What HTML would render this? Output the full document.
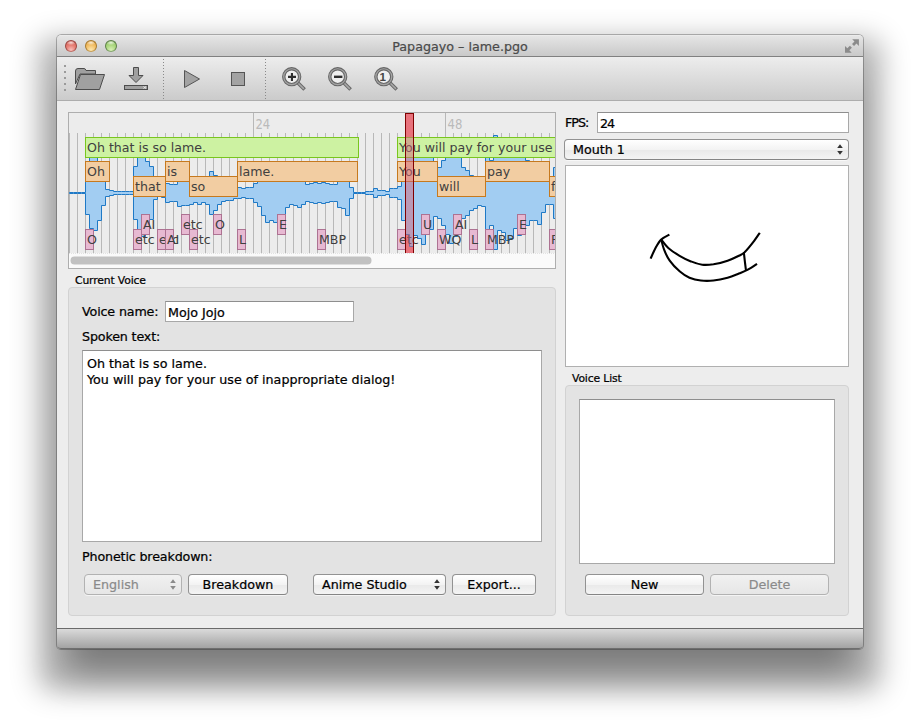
<!DOCTYPE html>
<html><head><meta charset="utf-8"><title>Papagayo – lame.pgo</title>
<style>
html,body{margin:0;padding:0;background:#fff;}
body{width:920px;height:728px;position:relative;overflow:hidden;font-family:"DejaVu Sans","Liberation Sans",sans-serif;font-size:12.7px;color:#000;-webkit-text-stroke:.22px currentColor;}
.abs{position:absolute;}
#win{position:absolute;left:57px;top:35px;width:806px;height:614px;border-radius:4.500px 4.500px 4px 4px;background:#ededed;
 box-shadow:0 0 0 1px rgba(0,0,0,.26),0 22.500px 28px 19px rgba(0,0,0,.29),0 34px 32.600px -10px rgba(0,0,0,.33);}
#title{left:0;top:0;width:806px;height:22px;border-radius:4.500px 4.500px 0 0;background:linear-gradient(#f2f2f2 0,#e5e5e5 1px,#c9c9c9);border-bottom:1px solid #808080;box-sizing:border-box;}
#title .t{position:absolute;left:0;width:806px;top:3.5px;text-align:center;font-size:12.7px;color:#4a4a4a;}
.tl{position:absolute;top:5px;width:12px;height:12px;border-radius:50%;box-sizing:border-box;}
#tool{left:0;top:22px;width:806px;height:44px;background:linear-gradient(#ededed,#cbcbcb);border-bottom:1px solid #adadad;box-sizing:border-box;}
#status{left:0;top:593px;width:806px;height:21px;border-radius:0 0 4px 4px;background:linear-gradient(#dadada,#a3a3a3);border-top:1px solid #6a6a6a;border-bottom:1px solid #6e6e6e;box-sizing:border-box;}
.lbl{position:absolute;white-space:nowrap;line-height:16px;margin-top:1px;letter-spacing:-.15px;}
.grp{position:absolute;background:#e3e3e3;border:1px solid #d2d2d2;border-radius:4px;box-sizing:border-box;}
.inp{position:absolute;background:#fff;border:1px solid #a8a8a8;border-top-color:#8e8e8e;box-sizing:border-box;white-space:nowrap;}
.btn{position:absolute;box-sizing:border-box;height:21px;border:1px solid #929292;border-bottom-color:#858585;border-radius:4px;background:linear-gradient(#ffffff,#f3f3f3 50%,#e9e9e9 51%,#f4f4f4);text-align:center;line-height:18px;padding-top:1px;box-shadow:0 1px 0 rgba(255,255,255,.6);white-space:nowrap;}
.btn.dis{color:#8a8a8a;border-color:#b2b2b2;background:linear-gradient(#f1f1f1,#e6e6e6);}
.sel{text-align:left;padding-left:8px;}
.arr{position:absolute;right:5.300px;top:4.200px;width:6px;height:11px;}
svg text{font-family:"DejaVu Sans","Liberation Sans",sans-serif;}
</style></head><body>
<div id="win">
 <div id="title" class="abs">
  <div class="tl" style="left:8px;background:radial-gradient(ellipse 5px 2.500px at 50% 16%,rgba(255,255,255,.75),rgba(255,255,255,0)),radial-gradient(circle at 50% 90%,#f8c0bc 0,#e88278 45%,#dc6c62 72%,#9c3e38 100%);border:1px solid #9c4640;border-bottom-color:#c07068;"></div>
  <div class="tl" style="left:28px;background:radial-gradient(ellipse 5px 2.500px at 50% 16%,rgba(255,255,255,.75),rgba(255,255,255,0)),radial-gradient(circle at 50% 90%,#fce8b0 0,#f4c470 45%,#eab050 72%,#a87424 100%);border:1px solid #a87a2c;border-bottom-color:#c8a058;"></div>
  <div class="tl" style="left:48px;background:radial-gradient(ellipse 5px 2.500px at 50% 16%,rgba(255,255,255,.75),rgba(255,255,255,0)),radial-gradient(circle at 50% 90%,#daf0b8 0,#b0da84 45%,#9ccc6e 72%,#567c42 100%);border:1px solid #5e8048;border-bottom-color:#86a870;"></div>
  <div class="t">Papagayo – lame.pgo</div>
  <svg class="abs" style="left:787px;top:4px" width="16" height="15" viewBox="844 39 16 15"><g fill="#8b8b8b"><path d="M852.200 39.200 H858.900 V45.900 L856.500 43.500 L854 46 L852 44 L854.500 41.500 Z"/><path d="M845 45.900 V52.650 H851.700 L849.350 50.300 L851.900 47.800 L849.900 45.800 L847.350 48.300 Z"/></g></svg>
 </div>
 <div id="tool" class="abs">
  <svg class="abs" style="left:0;top:0" width="806" height="43" viewBox="57 57 806 43">
   <g fill="#9a9a9a"><rect x="64" y="65" width="2" height="2"/><rect x="64" y="71" width="2" height="2"/><rect x="64" y="77" width="2" height="2"/><rect x="64" y="83" width="2" height="2"/><rect x="64" y="89" width="2" height="2"/></g>
   <g stroke="#8a8a8a" stroke-width="1" stroke-dasharray="1 2"><line x1="163.5" y1="59" x2="163.5" y2="99"/><line x1="265.5" y1="59" x2="265.5" y2="99"/></g>
   <!-- folder -->
   <g fill="#a0a0a0" stroke="#4c4c4c" stroke-width="1" stroke-linejoin="round">
    <path d="M75.5 84 L75.5 71 Q75.5 68.5 78 68.5 L84 68.5 Q85.5 68.5 86 70.5 L95.5 70.5 L95.5 74 L80 74 Z"/>
    <path d="M75.5 89.5 L80.5 74.5 L104.5 74.5 L99.5 89.5 Z"/>
   </g>
   <!-- download -->
   <g fill="#a0a0a0" stroke="#4c4c4c" stroke-width="1" stroke-linejoin="miter">
    <path d="M133.5 67.5 L138.5 67.5 L138.5 75.5 L143 75.5 L136 82.5 L129 75.5 L133.5 75.5 Z"/>
    <rect x="124.500" y="85.500" width="23" height="4"/>
   </g>
   <path d="M143.500 86.500 L146 88.500 M146 86.500 L143.500 88.500" stroke="#eee" stroke-width="1" fill="none"/>
   <!-- play / stop -->
   <path d="M184.500 70.500 L199.500 79 L184.500 87.500 Z" fill="#a3a3a3" stroke="#555" stroke-width="1" stroke-linejoin="round"/>
   <rect x="231.500" y="72.500" width="13" height="13" fill="#a3a3a3" stroke="#555" stroke-width="1"/>
   <!-- magnifiers -->
   <g id="mag">
    <line x1="297.500" y1="82.500" x2="304.600" y2="89.600" stroke="#686868" stroke-width="3.600"/>
    <line x1="297.500" y1="82.500" x2="303.900" y2="88.900" stroke="#a9a9a9" stroke-width="1.500"/>
    <circle cx="291.700" cy="76.700" r="9.100" fill="#a6a6a6" stroke="#686868" stroke-width="1.100"/>
    <circle cx="291.700" cy="76.700" r="6.800" fill="#efefef" stroke="#686868" stroke-width="1.100"/>
   </g>
   <use href="#mag" x="46"/><use href="#mag" x="92.100"/>
   <path d="M288 76.850 H296 M291.950 73 V81" stroke="#2e2e2e" stroke-width="2.100" fill="none"/>
   <path d="M334 76.800 H342.400" stroke="#2e2e2e" stroke-width="2.400" fill="none"/>
   <text x="382.700" y="80.800" text-anchor="middle" font-size="11.600" font-weight="bold" fill="#444" style="font-family:'Liberation Sans',sans-serif">1</text>
  </svg>
 </div>

 <!-- waveform panel -->
 <div class="abs" style="left:11px;top:77px;width:488px;height:157px;box-sizing:border-box;border:1px solid #aeaeae;background:#ececec;overflow:hidden;">
  <svg class="abs" style="left:0;top:0" width="486" height="155" viewBox="69 113 486 155">
   <g fill="#b8b8b8"><rect x="69" y="133" width="1" height="120"/><rect x="77" y="133" width="1" height="120"/><rect x="85" y="133" width="1" height="120"/><rect x="93" y="133" width="1" height="120"/><rect x="101" y="133" width="1" height="120"/><rect x="109" y="133" width="1" height="120"/><rect x="117" y="133" width="1" height="120"/><rect x="125" y="133" width="1" height="120"/><rect x="133" y="133" width="1" height="120"/><rect x="141" y="133" width="1" height="120"/><rect x="149" y="133" width="1" height="120"/><rect x="157" y="133" width="1" height="120"/><rect x="165" y="133" width="1" height="120"/><rect x="173" y="133" width="1" height="120"/><rect x="181" y="133" width="1" height="120"/><rect x="189" y="133" width="1" height="120"/><rect x="197" y="133" width="1" height="120"/><rect x="205" y="133" width="1" height="120"/><rect x="213" y="133" width="1" height="120"/><rect x="221" y="133" width="1" height="120"/><rect x="229" y="133" width="1" height="120"/><rect x="237" y="133" width="1" height="120"/><rect x="245" y="133" width="1" height="120"/><rect x="253" y="113" width="1" height="140"/><rect x="261" y="133" width="1" height="120"/><rect x="269" y="133" width="1" height="120"/><rect x="277" y="133" width="1" height="120"/><rect x="285" y="133" width="1" height="120"/><rect x="293" y="133" width="1" height="120"/><rect x="301" y="133" width="1" height="120"/><rect x="309" y="133" width="1" height="120"/><rect x="317" y="133" width="1" height="120"/><rect x="325" y="133" width="1" height="120"/><rect x="333" y="133" width="1" height="120"/><rect x="341" y="133" width="1" height="120"/><rect x="349" y="133" width="1" height="120"/><rect x="357" y="133" width="1" height="120"/><rect x="365" y="133" width="1" height="120"/><rect x="373" y="133" width="1" height="120"/><rect x="381" y="133" width="1" height="120"/><rect x="389" y="133" width="1" height="120"/><rect x="397" y="133" width="1" height="120"/><rect x="405" y="133" width="1" height="120"/><rect x="413" y="133" width="1" height="120"/><rect x="421" y="133" width="1" height="120"/><rect x="429" y="133" width="1" height="120"/><rect x="437" y="133" width="1" height="120"/><rect x="445" y="113" width="1" height="140"/><rect x="453" y="133" width="1" height="120"/><rect x="461" y="133" width="1" height="120"/><rect x="469" y="133" width="1" height="120"/><rect x="477" y="133" width="1" height="120"/><rect x="485" y="133" width="1" height="120"/><rect x="493" y="133" width="1" height="120"/><rect x="501" y="133" width="1" height="120"/><rect x="509" y="133" width="1" height="120"/><rect x="517" y="133" width="1" height="120"/><rect x="525" y="133" width="1" height="120"/><rect x="533" y="133" width="1" height="120"/><rect x="541" y="133" width="1" height="120"/><rect x="549" y="133" width="1" height="120"/></g>
   <text x="255.500" y="129.300" font-size="13.200" fill="#bababa" textLength="14.700" lengthAdjust="spacingAndGlyphs">24</text>
   <text x="447.500" y="129.300" font-size="13.200" fill="#bababa" textLength="14.900" lengthAdjust="spacingAndGlyphs">48</text>
   <rect x="405" y="113" width="9" height="140" fill="#ff7f7f"/>
   <polygon points="69.5,192.5 73.5,192.5 73.5,192.5 77.5,192.5 77.5,192.5 81.5,192.5 81.5,192.5 85.5,192.5 85.5,171.5 89.5,171.5 89.5,157.5 93.5,157.5 93.5,155.5 97.5,155.5 97.5,165.5 101.5,165.5 101.5,180.5 105.5,180.5 105.5,189.5 109.5,189.5 109.5,190.5 113.5,190.5 113.5,191.5 117.5,191.5 117.5,191.5 121.5,191.5 121.5,191.5 125.5,191.5 125.5,191.5 129.5,191.5 129.5,191.5 133.5,191.5 133.5,166.5 137.5,166.5 137.5,155.5 141.5,155.5 141.5,149.5 145.5,149.5 145.5,161.5 149.5,161.5 149.5,166.5 153.5,166.5 153.5,186.5 157.5,186.5 157.5,189.5 161.5,189.5 161.5,188.5 165.5,188.5 165.5,183.5 169.5,183.5 169.5,184.5 173.5,184.5 173.5,184.5 177.5,184.5 177.5,179.5 181.5,179.5 181.5,180.5 185.5,180.5 185.5,180.5 189.5,180.5 189.5,181.5 193.5,181.5 193.5,183.5 197.5,183.5 197.5,181.5 201.5,181.5 201.5,183.5 205.5,183.5 205.5,181.5 209.5,181.5 209.5,171.5 213.5,171.5 213.5,175.5 217.5,175.5 217.5,181.5 221.5,181.5 221.5,184.5 225.5,184.5 225.5,185.5 229.5,185.5 229.5,185.5 233.5,185.5 233.5,187.5 237.5,187.5 237.5,187.5 241.5,187.5 241.5,188.5 245.5,188.5 245.5,187.5 249.5,187.5 249.5,187.5 253.5,187.5 253.5,183.5 257.5,183.5 257.5,179.5 261.5,179.5 261.5,170.5 265.5,170.5 265.5,163.5 269.5,163.5 269.5,165.5 273.5,165.5 273.5,163.5 277.5,163.5 277.5,163.5 281.5,163.5 281.5,167.5 285.5,167.5 285.5,178.5 289.5,178.5 289.5,181.5 293.5,181.5 293.5,180.5 297.5,180.5 297.5,178.5 301.5,178.5 301.5,181.5 305.5,181.5 305.5,184.5 309.5,184.5 309.5,183.5 313.5,183.5 313.5,182.5 317.5,182.5 317.5,183.5 321.5,183.5 321.5,182.5 325.5,182.5 325.5,183.5 329.5,183.5 329.5,184.5 333.5,184.5 333.5,184.5 337.5,184.5 337.5,178.5 341.5,178.5 341.5,177.5 345.5,177.5 345.5,170.5 349.5,170.5 349.5,187.5 353.5,187.5 353.5,192.5 357.5,192.5 357.5,192.5 361.5,192.5 361.5,192.5 365.5,192.5 365.5,191.5 369.5,191.5 369.5,191.5 373.5,191.5 373.5,188.5 377.5,188.5 377.5,190.5 381.5,190.5 381.5,190.5 385.5,190.5 385.5,191.5 389.5,191.5 389.5,188.5 393.5,188.5 393.5,188.5 397.5,188.5 397.5,186.5 401.5,186.5 401.5,165.5 405.5,165.5 405.5,151.5 409.5,151.5 409.5,139.5 413.5,139.5 413.5,150.5 417.5,150.5 417.5,147.5 421.5,147.5 421.5,141.5 425.5,141.5 425.5,151.5 429.5,151.5 429.5,156.5 433.5,156.5 433.5,169.5 437.5,169.5 437.5,167.5 441.5,167.5 441.5,160.5 445.5,160.5 445.5,151.5 449.5,151.5 449.5,142.5 453.5,142.5 453.5,149.5 457.5,149.5 457.5,151.5 461.5,151.5 461.5,167.5 465.5,167.5 465.5,170.5 469.5,170.5 469.5,175.5 473.5,175.5 473.5,177.5 477.5,177.5 477.5,180.5 481.5,180.5 481.5,179.5 485.5,179.5 485.5,153.5 489.5,153.5 489.5,160.5 493.5,160.5 493.5,135.5 497.5,135.5 497.5,155.5 501.5,155.5 501.5,153.5 505.5,153.5 505.5,145.5 509.5,145.5 509.5,147.5 513.5,147.5 513.5,157.5 517.5,157.5 517.5,150.5 521.5,150.5 521.5,155.5 525.5,155.5 525.5,160.5 529.5,160.5 529.5,165.5 533.5,165.5 533.5,165.5 537.5,165.5 537.5,161.5 541.5,161.5 541.5,173.5 545.5,173.5 545.5,181.5 549.5,181.5 549.5,181.5 553.5,181.5 553.5,167.5 555.5,167.5 555.5,218.5 553.5,218.5 553.5,204.5 549.5,204.5 549.5,204.5 545.5,204.5 545.5,212.5 541.5,212.5 541.5,224.5 537.5,224.5 537.5,220.5 533.5,220.5 533.5,220.5 529.5,220.5 529.5,225.5 525.5,225.5 525.5,230.5 521.5,230.5 521.5,235.5 517.5,235.5 517.5,228.5 513.5,228.5 513.5,238.5 509.5,238.5 509.5,240.5 505.5,240.5 505.5,232.5 501.5,232.5 501.5,230.5 497.5,230.5 497.5,249.5 493.5,249.5 493.5,225.5 489.5,225.5 489.5,232.5 485.5,232.5 485.5,206.5 481.5,206.5 481.5,205.5 477.5,205.5 477.5,208.5 473.5,208.5 473.5,210.5 469.5,210.5 469.5,215.5 465.5,215.5 465.5,218.5 461.5,218.5 461.5,234.5 457.5,234.5 457.5,236.5 453.5,236.5 453.5,243.5 449.5,243.5 449.5,234.5 445.5,234.5 445.5,225.5 441.5,225.5 441.5,218.5 437.5,218.5 437.5,216.5 433.5,216.5 433.5,229.5 429.5,229.5 429.5,234.5 425.5,234.5 425.5,244.5 421.5,244.5 421.5,238.5 417.5,238.5 417.5,235.5 413.5,235.5 413.5,246.5 409.5,246.5 409.5,234.5 405.5,234.5 405.5,220.5 401.5,220.5 401.5,199.5 397.5,199.5 397.5,197.5 393.5,197.5 393.5,197.5 389.5,197.5 389.5,194.5 385.5,194.5 385.5,195.5 381.5,195.5 381.5,195.5 377.5,195.5 377.5,197.5 373.5,197.5 373.5,194.5 369.5,194.5 369.5,194.5 365.5,194.5 365.5,193.5 361.5,193.5 361.5,193.5 357.5,193.5 357.5,193.5 353.5,193.5 353.5,198.5 349.5,198.5 349.5,215.5 345.5,215.5 345.5,208.5 341.5,208.5 341.5,207.5 337.5,207.5 337.5,201.5 333.5,201.5 333.5,201.5 329.5,201.5 329.5,202.5 325.5,202.5 325.5,203.5 321.5,203.5 321.5,202.5 317.5,202.5 317.5,203.5 313.5,203.5 313.5,202.5 309.5,202.5 309.5,201.5 305.5,201.5 305.5,204.5 301.5,204.5 301.5,207.5 297.5,207.5 297.5,205.5 293.5,205.5 293.5,204.5 289.5,204.5 289.5,207.5 285.5,207.5 285.5,218.5 281.5,218.5 281.5,222.5 277.5,222.5 277.5,222.5 273.5,222.5 273.5,220.5 269.5,220.5 269.5,222.5 265.5,222.5 265.5,215.5 261.5,215.5 261.5,206.5 257.5,206.5 257.5,202.5 253.5,202.5 253.5,198.5 249.5,198.5 249.5,198.5 245.5,198.5 245.5,197.5 241.5,197.5 241.5,198.5 237.5,198.5 237.5,198.5 233.5,198.5 233.5,200.5 229.5,200.5 229.5,200.5 225.5,200.5 225.5,201.5 221.5,201.5 221.5,204.5 217.5,204.5 217.5,210.5 213.5,210.5 213.5,214.5 209.5,214.5 209.5,204.5 205.5,204.5 205.5,202.5 201.5,202.5 201.5,204.5 197.5,204.5 197.5,202.5 193.5,202.5 193.5,204.5 189.5,204.5 189.5,205.5 185.5,205.5 185.5,205.5 181.5,205.5 181.5,206.5 177.5,206.5 177.5,201.5 173.5,201.5 173.5,201.5 169.5,201.5 169.5,202.5 165.5,202.5 165.5,197.5 161.5,197.5 161.5,196.5 157.5,196.5 157.5,199.5 153.5,199.5 153.5,219.5 149.5,219.5 149.5,224.5 145.5,224.5 145.5,236.5 141.5,236.5 141.5,230.5 137.5,230.5 137.5,219.5 133.5,219.5 133.5,194.5 129.5,194.5 129.5,194.5 125.5,194.5 125.5,194.5 121.5,194.5 121.5,194.5 117.5,194.5 117.5,194.5 113.5,194.5 113.5,195.5 109.5,195.5 109.5,196.5 105.5,196.5 105.5,205.5 101.5,205.5 101.5,220.5 97.5,220.5 97.5,230.5 93.5,230.5 93.5,228.5 89.5,228.5 89.5,214.5 85.5,214.5 85.5,193.5 81.5,193.5 81.5,193.5 77.5,193.5 77.5,193.5 73.5,193.5 73.5,193.5 69.5,193.5" fill="#a2cdf2" stroke="#1e79c6" stroke-width="1" stroke-linejoin="miter"/>
   <g font-size="12.600" fill="#404040">
   <style>.ph{fill:#cdf2a2;stroke:#79c61e;stroke-width:1}.wd{fill:#f2cda2;stroke:#c6791e;stroke-width:1}.pn{fill:#e7b9d2;stroke:#ad7292;stroke-width:1}</style>
<rect class="ph" x="85.5" y="137.5" width="273" height="20"/><text x="87" y="152.3">Oh that is so lame.</text>
<rect class="ph" x="397.5" y="137.5" width="163" height="20"/><text x="399" y="152.3">You will pay for your use</text>
<rect class="wd" x="85.5" y="161.5" width="24" height="20"/><text x="87" y="176.3">Oh</text>
<rect class="wd" x="133.5" y="176.5" width="32" height="20"/><text x="135" y="191.3">that</text>
<rect class="wd" x="165.5" y="161.5" width="24" height="20"/><text x="167" y="176.3">is</text>
<rect class="wd" x="189.5" y="176.5" width="48" height="20"/><text x="191" y="191.3">so</text>
<rect class="wd" x="237.5" y="161.5" width="120" height="20"/><text x="239" y="176.3">lame.</text>
<rect class="wd" x="397.5" y="161.5" width="40" height="20"/><text x="399" y="176.3">You</text>
<rect class="wd" x="437.5" y="176.5" width="48" height="20"/><text x="439" y="191.3">will</text>
<rect class="wd" x="485.5" y="161.5" width="64" height="20"/><text x="487" y="176.3">pay</text>
<rect class="wd" x="549.5" y="176.5" width="51" height="20"/><text x="551" y="191.3">f</text>
<rect class="pn" x="85.5" y="229.5" width="8" height="20"/><text x="87" y="244.3">O</text>
<rect class="pn" x="133.5" y="229.5" width="8" height="20"/><text x="135" y="244.3">etc</text>
<rect class="pn" x="141.5" y="214.5" width="8" height="20"/><text x="143" y="229.3">AI</text>
<rect class="pn" x="157.5" y="229.5" width="8" height="20"/><text x="159" y="244.3">etc</text>
<rect class="pn" x="165.5" y="229.5" width="8" height="20"/><text x="167" y="244.3">AI</text>
<rect class="pn" x="181.5" y="214.5" width="8" height="20"/><text x="183" y="229.3">etc</text>
<rect class="pn" x="189.5" y="229.5" width="8" height="20"/><text x="191" y="244.3">etc</text>
<rect class="pn" x="213.5" y="214.5" width="8" height="20"/><text x="215" y="229.3">O</text>
<rect class="pn" x="237.5" y="229.5" width="8" height="20"/><text x="239" y="244.3">L</text>
<rect class="pn" x="277.5" y="214.5" width="8" height="20"/><text x="279" y="229.3">E</text>
<rect class="pn" x="317.5" y="229.5" width="8" height="20"/><text x="319" y="244.3">MBP</text>
<rect class="pn" x="397.5" y="229.5" width="8" height="20"/><text x="399" y="244.3">etc</text>
<rect class="pn" x="421.5" y="214.5" width="8" height="20"/><text x="423" y="229.3">U</text>
<rect class="pn" x="437.5" y="229.5" width="8" height="20"/><text x="439" y="244.3">WQ</text>
<rect class="pn" x="453.5" y="214.5" width="8" height="20"/><text x="455" y="229.3">AI</text>
<rect class="pn" x="469.5" y="229.5" width="8" height="20"/><text x="471" y="244.3">L</text>
<rect class="pn" x="485.5" y="229.5" width="8" height="20"/><text x="487" y="244.3">MBP</text>
<rect class="pn" x="517.5" y="214.5" width="8" height="20"/><text x="519" y="229.3">E</text>
<rect class="pn" x="549.5" y="229.5" width="8" height="20"/><text x="551" y="244.3">F</text>
   </g>
   <rect x="405.500" y="113.500" width="8" height="142" fill="rgba(209,102,121,.5)" stroke="#800000" stroke-width="1"/>
   <rect x="69" y="253" width="486" height="15" fill="#fafafa"/>
   <line x1="69" y1="253.500" x2="555" y2="253.500" stroke="#e2e2e2" stroke-dasharray="1 1"/>
   <rect x="70.500" y="256.500" width="301" height="8" rx="4" fill="#c1c1c1"/>
  </svg>
 </div>

 <!-- Current voice -->
 <div class="lbl" style="left:18px;top:237px;font-size:10.800px;">Current Voice</div>
 <div class="grp" style="left:11px;top:252px;width:488px;height:329px;"></div>
 <div class="lbl" style="left:25px;top:268px;">Voice name:</div>
 <div class="inp" style="left:108px;top:266px;width:189px;height:21px;line-height:21px;padding-left:2px;">Mojo Jojo</div>
 <div class="lbl" style="left:25px;top:293px;">Spoken text:</div>
 <div class="inp" style="left:25px;top:315px;width:460px;height:192px;padding:5px 0 0 4px;line-height:16px;">Oh that is so lame.<br>You will pay for your use of inappropriate dialog!</div>
 <div class="lbl" style="left:25px;top:513px;">Phonetic breakdown:</div>
 <div class="btn dis sel" style="left:27px;top:539px;width:98px;">English<svg class="arr" viewBox="0 0 6 11"><path d="M3 .2 L5.800 4 H.2 Z M3 10.800 L5.800 7 H.2 Z" fill="#8a8a8a"/></svg></div>
 <div class="btn" style="left:131px;top:539px;width:100px;">Breakdown</div>
 <div class="btn sel" style="left:256px;top:539px;width:133px;">Anime Studio<svg class="arr" viewBox="0 0 6 11"><path d="M3 .2 L5.800 4 H.2 Z M3 10.800 L5.800 7 H.2 Z" fill="#333"/></svg></div>
 <div class="btn" style="left:395px;top:539px;width:84px;">Export...</div>

 <!-- right column -->
 <div class="lbl" style="left:508px;top:79px;letter-spacing:-1px;">FPS:</div>
 <div class="inp" style="left:540px;top:77px;width:252px;height:21px;line-height:21px;padding-left:2px;letter-spacing:-1px;">24</div>
 <div class="btn sel" style="left:507px;top:104px;width:285px;height:21px;line-height:17px;">Mouth 1<svg class="arr" viewBox="0 0 6 11"><path d="M3 .2 L5.800 4 H.2 Z M3 10.800 L5.800 7 H.2 Z" fill="#333"/></svg></div>
 <div class="inp" style="left:508px;top:130px;width:284px;height:202px;border-color:#b0b0b0;">
  <svg class="abs" style="left:0;top:0" width="282" height="200" viewBox="566 166 282 200" fill="none" stroke="#000" stroke-width="2.100" stroke-linecap="butt" stroke-linejoin="round">
   <path d="M650.6 258.6 C651.4 256.9 653.8 251.2 655.5 248.0 C657.3 244.8 658.9 241.8 661.2 239.5 C663.5 237.3 668.0 235.4 669.4 234.6"/><path d="M661.2 239.5 C662.4 241.0 665.2 245.3 668.3 248.0 C671.3 250.7 675.8 253.6 679.6 255.8 C683.3 258.0 687.1 260.0 690.9 261.4 C694.6 262.9 698.4 264.2 702.2 264.7 C705.9 265.2 709.2 264.9 713.5 264.3 C717.7 263.6 723.4 262.2 727.6 260.7 C731.8 259.3 736.1 257.2 738.9 255.8 C741.7 254.4 742.2 254.5 744.6 252.3 C746.9 250.0 750.5 245.6 753.0 242.4 C755.6 239.1 758.7 234.4 759.8 232.8"/><path d="M661.2 239.5 C661.7 241.2 662.6 245.9 664.0 249.4 C665.4 253.0 667.1 257.1 669.7 260.7 C672.3 264.4 676.3 268.5 679.6 271.3 C682.9 274.2 685.9 276.2 689.5 277.7 C693.0 279.2 696.8 280.1 700.8 280.5 C704.8 281.0 709.0 281.0 713.5 280.5 C718.0 280.1 723.4 278.9 727.6 277.7 C731.8 276.5 735.6 274.8 738.9 273.5 C742.2 272.2 744.4 271.5 747.4 269.9 C750.4 268.3 755.4 264.9 757.0 263.8"/><path d="M743.9 253.0 C744.2 255.9 745.6 267.7 746.0 270.6"/>
  </svg>
 </div>
 <div class="lbl" style="left:515px;top:335px;font-size:10.800px;">Voice List</div>
 <div class="grp" style="left:508px;top:350px;width:284px;height:231px;"></div>
 <div class="inp" style="left:522px;top:364px;width:256px;height:165px;"></div>
 <div class="btn" style="left:528px;top:539px;width:119px;">New</div>
 <div class="btn dis" style="left:653px;top:539px;width:119px;">Delete</div>

 <div id="status" class="abs"></div>
</div>
</body></html>
